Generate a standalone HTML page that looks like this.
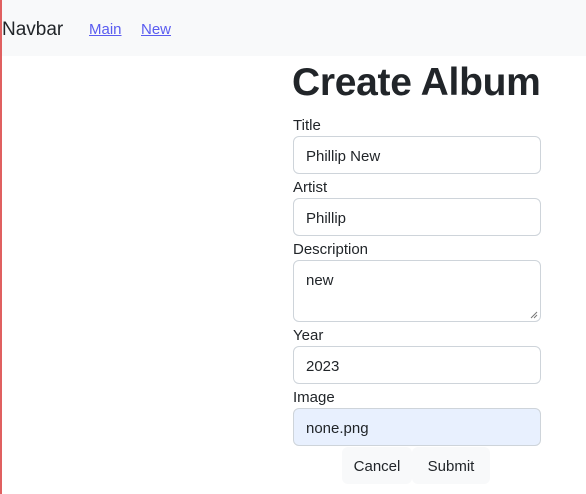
<!DOCTYPE html>
<html><head><meta charset="utf-8"><style>
*{box-sizing:border-box;margin:0;padding:0}
body{width:586px;height:494px;background:#fff;font-family:"Liberation Sans",sans-serif;color:#212529;position:relative;overflow:hidden}
.red{position:absolute;left:0;top:0;width:2px;height:494px;background:#e06060}
.nav{position:absolute;left:0;top:0;width:586px;height:56px;background:#f8f9fa}
.brand{position:absolute;left:2px;top:19px;font-size:19px;color:#212529}
.nav a{position:absolute;top:21px;font-size:15px;color:#5a5cf0;text-decoration:underline}
h1{position:absolute;left:292px;top:59px;font-size:39px;font-weight:bold;letter-spacing:-0.3px;line-height:48px}
.l{position:absolute;left:293px;font-size:15px;line-height:20px}
.i{position:absolute;left:293px;width:248px;height:38px;border:1px solid #ced4da;border-radius:6px;padding:0 12px;font-size:15px;line-height:39px;background:#fff}
.btn{position:absolute;top:447px;height:37px;background:#f8f9fa;border-radius:6px;font-size:15px;line-height:39px;text-align:center}
</style></head><body>
<div class="nav"><span class="brand">Navbar</span><a style="left:89px">Main</a><a style="left:141px">New</a></div>
<div class="red"></div>
<h1>Create Album</h1>
<div class="l" style="top:116px">Title</div>
<div class="i" style="top:136px">Phillip New</div>
<div class="l" style="top:178px">Artist</div>
<div class="i" style="top:198px">Phillip</div>
<div class="l" style="top:240px">Description</div>
<div class="i" style="top:260px;height:62px;line-height:20px;padding-top:10px">new<svg style="position:absolute;right:2px;bottom:2px" width="8" height="8"><path d="M1 7L7 1M4 7L7 4" stroke="#777" stroke-width="1"/></svg></div>
<div class="l" style="top:326px">Year</div>
<div class="i" style="top:346px">2023</div>
<div class="l" style="top:388px">Image</div>
<div class="i" style="top:408px;background:#e8f0fe">none.png</div>
<div class="btn" style="left:342px;width:70px">Cancel</div>
<div class="btn" style="left:412px;width:78px">Submit</div>
</body></html>
